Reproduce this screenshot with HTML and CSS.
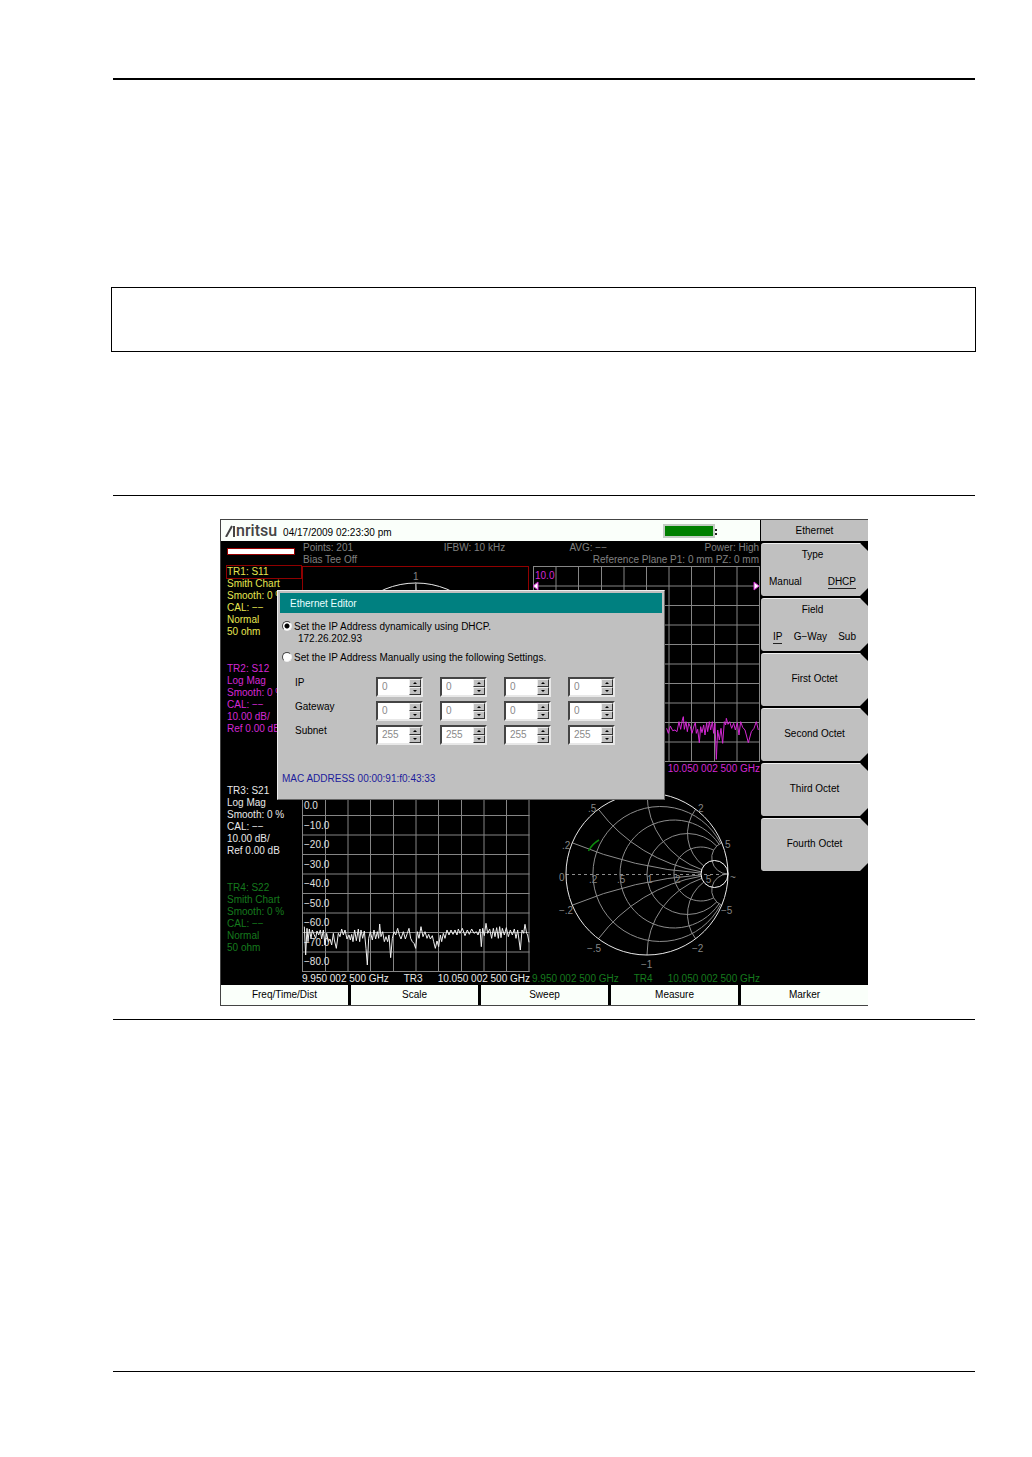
FILE: index.html
```html
<!DOCTYPE html>
<html lang="en">
<head>
<meta charset="utf-8">
<title>Ethernet Editor</title>
<link rel="stylesheet" href="styles.css">
</head>
<body>
<main class="page">
  <header class="page-head"></header>
  <aside class="note"></aside>
  <figure class="figure">
    <div class="screen">
      <div class="display">
        <header class="topbar">
          <span class="logo" aria-label="Anritsu">
            <svg class="logo-mark" viewBox="0 0 11 12" aria-hidden="true"><path d="M1 12 7 1M9 1V12" fill="none" stroke="#444" stroke-width="2"/></svg><span>nritsu</span>
          </span>
          <time>04/17/2009 02:23:30 pm</time>
          <span class="battery"></span>
        </header>
        <div class="workspace">
          <aside class="traces">
            <div class="sweep"></div>
            <div class="trace-group">
              <ul class="trace yellow"><li class="active">TR1: S11</li><li>Smith Chart</li><li>Smooth: 0 %</li><li>CAL: −−</li><li>Normal</li><li>50 ohm</li></ul>
              <ul class="trace magenta"><li>TR2: S12</li><li>Log Mag</li><li>Smooth: 0 %</li><li>CAL: −−</li><li>10.00 dB/</li><li>Ref 0.00 dB</li></ul>
            </div>
            <div class="trace-group">
              <ul class="trace white"><li>TR3: S21</li><li>Log Mag</li><li>Smooth: 0 %</li><li>CAL: −−</li><li>10.00 dB/</li><li>Ref 0.00 dB</li></ul>
              <ul class="trace green"><li>TR4: S22</li><li>Smith Chart</li><li>Smooth: 0 %</li><li>CAL: −−</li><li>Normal</li><li>50 ohm</li></ul>
            </div>
          </aside>
          <div class="plots">
            <div class="status">
              <div class="status-row"><span>Points: 201</span><span>IFBW: 10 kHz</span><span>AVG: −−</span><span class="end">Power: High</span></div>
              <div class="status-row two"><span>Bias Tee Off</span><span class="end">Reference Plane P1: 0 mm PZ: 0 mm</span></div>
            </div>
            <div class="plot-grid">
              <section class="plot">
                <svg viewBox="0 0 230 198">
                  <defs>
                    <g id="half">
                      <path d="M-74.800-31.200A405 405 0 0 0 54-.9M-48.600-64.800A162 162 0 0 0 54.200-2.200M0-81A81 81 0 0 0 54.700-4.400M48.600-64.800A40.500 40.500 0 0 0 56.700-8.100M74.800-31.200A16.200 16.200 0 0 0 81 0"/>
                    </g>
                    <g id="smith" fill="none" stroke="#8c8c8c">
                      <use href="#half"/><use href="#half" transform="scale(1 -1)"/>
                      <path d="M73.600-30.600A67.500 67.500 0 1 0 73.600 30.600M72.100-29.700A54 54 0 1 0 72.100 29.700M69.800-27.900A40.500 40.500 0 1 0 69.800 27.900M66.700-23.800A27 27 0 1 0 66.700 23.800"/>
                      <path d="M-81 .5H81" stroke-dasharray="3 3"/>
                      <circle r="81" stroke="#e8e8e8"/>
                      <circle cx="67.500" r="13.500" stroke="#fff"/>
                    </g>
                  </defs>
                  <rect x="1.500" y="1.500" width="226" height="195" class="frame-red"/>
                  <use href="#smith" x="115" y="99"/>
                  <path d="M114.500 17V30" stroke="#8c8c8c"/>
                  <text class="tick dim" x="112" y="15">1</text>
                </svg>
                <div class="caption"></div>
              </section>
              <section class="plot">
                <svg viewBox="0 0 230 198">
                  <path class="grid" d="M2 1.500H228.500M2 21H228.500M2 40.500H228.500M2 60H228.500M2 79.500H228.500M2 99H228.500M2 118.500H228.500M2 138H228.500M2 157.500H228.500M2 177H228.500M2 196.500H228.500M2.500 1V197M25 1V197M47.500 1V197M70.500 1V197M93 1V197M115.500 1V197M138 1V197M160.500 1V197M183.500 1V197M206 1V197M228.500 1V197"/>
                  <path d="M2 21 7 17V25ZM228 21 223 17V25Z" fill="#fff" stroke="#d428d4"/>
                  <text class="tick magenta-fill" x="4" y="14">10.0</text>
                  <polyline class="line magenta-line" transform="translate(124 125) scale(.33333)" points="35,115 40,130 46,108 53,122 60,120 66,125 72,95 77,118 82,90 85,80 88,118 93,95 97,125 101,100 106,110 111,130 117,108 121,98 124,130 128,118 133,158 137,110 141,128 146,105 150,135 155,98 158,125 163,95 167,120 172,95 176,130 180,100 184,208 188,120 193,150 198,115 203,160 208,95 212,105 214,85 219,103 224,95 230,115 236,100 241,120 247,98 252,135 257,95 263,112 270,120 280,158 289,125 297,115 304,95 310,120"/>
                </svg>
                <div class="caption last magenta"><span>10.050 002 500 GHz</span></div>
              </section>
              <section class="plot">
                <svg viewBox="0 0 230 198">
                  <path class="grid" d="M1 1.500H228.500M1 21H228.500M1 40.500H228.500M1 60H228.500M1 79.500H228.500M1 99H228.500M1 118.500H228.500M1 138H228.500M1 157.500H228.500M1 177H228.500M1 196.500H228.500M1.500 1V197M24.500 1V197M47 1V197M69.500 1V197M92.500 1V197M115 1V197M137.500 1V197M160.500 1V197M183 1V197M205.500 1V197M228 1V197"/>
                  <g class="tick white-fill">
                    <text x="3" y="34">0.0</text><text x="3" y="54">−10.0</text><text x="3" y="73">−20.0</text><text x="3" y="93">−30.0</text><text x="3" y="112">−40.0</text><text x="3" y="132">−50.0</text><text x="3" y="151">−60.0</text><text x="3" y="171">−70.0</text><text x="3" y="190">−80.0</text>
                  </g>
                  <polyline class="line white-line" transform="translate(-86 0) scale(.33333)" points="268,455 272,540 276,460 279,500 283,462 288,490 292,465 297,478 302,490 306,468 311,480 316,465 320,492 325,465 330,510 335,475 340,500 345,492 350,510 355,475 358,495 364,520 370,475 375,485 380,462 385,480 390,465 396,492 402,480 406,495 410,478 414,500 419,465 424,497 430,462 434,500 438,465 443,490 448,468 453,520 457,570 461,490 466,470 472,495 477,465 482,492 487,470 491,490 494,447 498,485 503,470 508,500 513,485 518,500 522,480 527,548 532,490 537,470 542,480 548,460 553,480 558,492 565,470 571,492 577,475 582,460 587,490 592,500 597,505 602,520 607,470 612,490 618,455 624,485 630,470 636,490 641,478 646,492 652,482 656,500 661,520 666,498 671,515 676,480 680,500 685,475 690,490 696,465 702,480 708,465 714,478 720,465 726,480 730,462 735,475 742,460 750,482 757,465 763,478 770,462 777,475 784,470 789,480 795,462 799,515 803,460 808,482 813,445 818,475 824,462 830,490 835,460 840,485 845,458 850,490 854,455 858,488 862,460 868,480 874,458 880,485 886,465 892,480 898,462 903,490 908,465 916,525 921,465 926,475 930,448 935,475 938,480 942,502"/>
                </svg>
                <div class="caption white"><span>9.950 002 500 GHz</span><span>TR3</span><span>10.050 002 500 GHz</span></div>
              </section>
              <section class="plot">
                <svg viewBox="0 0 230 198">
                  <use href="#smith" x="116" y="99"/>
                  <g class="tick dim">
                    <text x="57" y="37">.5</text><text x="167" y="37">2</text><text x="31" y="74">.2</text><text x="194" y="73">5</text><text x="28" y="106">0</text><text x="199" y="106">~</text><text x="28" y="139">−.2</text><text x="190" y="139">−5</text><text x="56" y="177">−.5</text><text x="161" y="177">−2</text><text x="110" y="193">−1</text>
                    <text x="58" y="108">.2</text><text x="86" y="108">.5</text><text x="116" y="108">1</text><text x="144" y="108">2</text><text x="172" y="108">.5</text>
                  </g>
                  <path d="M57.500 76Q61 69 68 65" fill="none" stroke="#0b8a0b" stroke-width="1.500"/>
                </svg>
                <div class="caption green"><span>9.950 002 500 GHz</span><span>TR4</span><span>10.050 002 500 GHz</span></div>
              </section>
            </div>
          </div>
        </div>
      </div>

      <nav class="menu">
        <h2 class="menu-title">Ethernet</h2>
        <button class="key options"><span class="key-name">Type</span><span class="choices"><span>Manual</span><span class="on">DHCP</span></span></button>
        <button class="key options"><span class="key-name">Field</span><span class="choices three"><span class="on">IP</span><span>G−Way</span><span>Sub</span></span></button>
        <button class="key">First Octet</button>
        <button class="key">Second Octet</button>
        <button class="key">Third Octet</button>
        <button class="key">Fourth Octet</button>
      </nav>

      <nav class="tabs">
        <button>Freq/Time/Dist</button><button>Scale</button><button>Sweep</button><button>Measure</button><button>Marker</button>
      </nav>

      <form class="dialog" role="dialog" aria-labelledby="dialog-title">
        <h1 class="dialog-title" id="dialog-title">Ethernet Editor</h1>
        <div class="dialog-body">
          <label class="choice"><input type="radio" name="mode" checked><span>Set the IP Address dynamically using DHCP.</span></label>
          <p class="address">172.26.202.93</p>
          <label class="choice"><input type="radio" name="mode"><span>Set the IP Address Manually using the following Settings.</span></label>
          <div class="octets">
            <label for="ip1">IP</label>
            <span class="spin"><input id="ip1" value="0" disabled><button type="button" class="up" aria-label="Up" disabled></button><button type="button" class="down" aria-label="Down" disabled></button></span>
            <span class="spin"><input aria-label="IP second octet" value="0" disabled><button type="button" class="up" aria-label="Up" disabled></button><button type="button" class="down" aria-label="Down" disabled></button></span>
            <span class="spin"><input aria-label="IP third octet" value="0" disabled><button type="button" class="up" aria-label="Up" disabled></button><button type="button" class="down" aria-label="Down" disabled></button></span>
            <span class="spin"><input aria-label="IP fourth octet" value="0" disabled><button type="button" class="up" aria-label="Up" disabled></button><button type="button" class="down" aria-label="Down" disabled></button></span>
            <label for="gw1">Gateway</label>
            <span class="spin"><input id="gw1" value="0" disabled><button type="button" class="up" aria-label="Up" disabled></button><button type="button" class="down" aria-label="Down" disabled></button></span>
            <span class="spin"><input aria-label="Gateway second octet" value="0" disabled><button type="button" class="up" aria-label="Up" disabled></button><button type="button" class="down" aria-label="Down" disabled></button></span>
            <span class="spin"><input aria-label="Gateway third octet" value="0" disabled><button type="button" class="up" aria-label="Up" disabled></button><button type="button" class="down" aria-label="Down" disabled></button></span>
            <span class="spin"><input aria-label="Gateway fourth octet" value="0" disabled><button type="button" class="up" aria-label="Up" disabled></button><button type="button" class="down" aria-label="Down" disabled></button></span>
            <label for="sn1">Subnet</label>
            <span class="spin"><input id="sn1" value="255" disabled><button type="button" class="up" aria-label="Up" disabled></button><button type="button" class="down" aria-label="Down" disabled></button></span>
            <span class="spin"><input aria-label="Subnet second octet" value="255" disabled><button type="button" class="up" aria-label="Up" disabled></button><button type="button" class="down" aria-label="Down" disabled></button></span>
            <span class="spin"><input aria-label="Subnet third octet" value="255" disabled><button type="button" class="up" aria-label="Up" disabled></button><button type="button" class="down" aria-label="Down" disabled></button></span>
            <span class="spin"><input aria-label="Subnet fourth octet" value="255" disabled><button type="button" class="up" aria-label="Up" disabled></button><button type="button" class="down" aria-label="Down" disabled></button></span>
          </div>
          <p class="mac">MAC ADDRESS 00:00:91:f0:43:33</p>
        </div>
      </form>
    </div>
  </figure>
  <footer class="page-foot"></footer>
</main>
</body>
</html>
```
FILE: styles.css
```css
* { box-sizing: border-box; }
body { margin: 0; background: #fff; color: #000; font: 10px/12px "Liberation Sans", Arial, sans-serif; }
h1, h2, p, ul, figure { margin: 0; padding: 0; font: inherit; }
ul { list-style: none; }
button, input { margin: 0; padding: 0; font: inherit; color: inherit; border: 0; border-radius: 0; }

.page { padding: 78px 57px 84px 113px; }
.page-head { border-top: 2px solid #000; }
.note { min-height: 65px; margin: 207px -1px 143px -2px; border: 1px solid #000; }
.figure { padding: 23px 0 13px; border: solid #000; border-width: 1px 0; }
.page-foot { margin-top: 351px; border-top: 1px solid #000; }

.screen { position: relative; display: grid; grid-template-columns: minmax(0, 1fr) 108px; max-width: 648px; margin: 0 auto; background: #000; white-space: nowrap; border: 1px solid #444; border-width: 1px 0 1px 1px; }

.topbar { display: flex; align-items: center; gap: 6px; height: 21px; padding: 0 45px 0 4px; background: #fafffa; }
.logo { display: flex; align-items: center; font: 500 16px/20px Roboto, sans-serif; color: #444; }
.logo-mark { width: 11px; height: 12px; }
.topbar time { padding-top: 4px; }
.battery { position: relative; width: 52px; height: 14px; margin-left: auto; background: #008000; border: 2px solid #c4ccc4; }
.battery::after { content: ""; position: absolute; left: 50px; top: 3px; height: 6px; border-right: 2px dotted #222; }

.workspace { display: grid; grid-template-columns: 80px minmax(0, 1fr); }
.traces { display: flex; flex-direction: column; padding: 7px 0 0 6px; }
.sweep { height: 7px; margin-right: 6px; background: #fff; border: 1px solid #900; }
.trace-group { display: grid; gap: 25px; margin-top: 11px; }
.trace-group + .trace-group { margin-top: 50px; }
.active { outline: 1px solid #900000; }
.yellow { color: #e6e650; }
.magenta { color: #d428d4; }
.white { color: #e8e8e8; }
.green { color: #157a1d; }

.status { height: 24px; padding: 0 1px 0 2px; color: #808080; line-height: 13px; }
.status-row { display: grid; grid-template-columns: 141fr 126fr 134fr 56fr; height: 12px; }
.status-row.two { grid-template-columns: 1fr auto; }
.end { text-align: right; }
.plot-grid { display: grid; grid-template-columns: 1fr 1fr; margin-right: -1px; }
.plot { min-width: 0; }
.plot svg { display: block; width: 100%; }
.caption { display: flex; justify-content: space-between; min-height: 12px; padding: 0 1px; }
.caption.last { justify-content: flex-end; }
.grid { fill: none; stroke: #858585; }
.frame-red { fill: none; stroke: #900000; }
.tick { font-size: 10px; }
.dim { fill: #858585; }
.magenta-fill { fill: #d428d4; }
.white-fill { fill: #e0e0e0; }
.line { fill: none; stroke-width: 3px; }
.magenta-line { stroke: #d428d4; }
.white-line { stroke: #f0f0f0; }

.menu { display: flex; flex-direction: column; gap: 2px; padding-left: 1px; }
.menu-title { height: 21px; background: #c0c0c0; text-align: center; line-height: 22px; }
.key { height: 53px; padding-bottom: 2px; background: #c0c0c0; border-top: 1px solid #eee; border-radius: 3px; clip-path: polygon(0 0, 99px 0, 100% 8px, 100% 45px, 99px 100%, 0 100%); }
.options { display: flex; flex-direction: column; justify-content: space-between; padding: 5px 12px 7px 8px; }
.key-name { align-self: center; }
.choices { display: flex; justify-content: space-between; align-self: stretch; }
.choices.three { padding-left: 4px; }
.on { border-bottom: 1px solid #222; }

.tabs { grid-column: 1 / -1; display: grid; grid-template-columns: repeat(5, 1fr); gap: 3px; }
.tabs button { height: 20px; background: #fafffa; }

.dialog { position: absolute; left: 56px; top: 70px; width: 388px; height: 210px; padding: 2px; background: #c0c0c0; border: 1px solid #ececec; border-right-color: #666; border-bottom-color: #666; }
.dialog-title { height: 20px; padding-left: 10px; line-height: 21px; background: #008080; color: #e8ffff; }
.dialog-body { padding: 8px 2px 0; }
.choice { display: flex; gap: 2px; line-height: 12px; }
.choice input { appearance: none; width: 10px; height: 10px; background: #fff; border: 1px solid; border-color: #444 #eee #eee #444; border-radius: 50%; }
.choice input:checked { background: radial-gradient(circle, #000 2px, #fff 3px); }
.address { padding: 0 16px; }
.address + .choice { margin-top: 7px; }
.octets { display: grid; grid-template-columns: 64px repeat(4, 47px); gap: 4px 17px; padding: 13px 0 0 13px; }
.spin { display: grid; grid-template-columns: 1fr 12px; grid-template-rows: 8px 8px; height: 20px; border: 2px solid; border-color: #444 #e8e8e8 #e8e8e8 #444; background: #fff; }
.spin input { grid-row: 1 / 3; min-width: 0; width: 100%; padding-left: 4px; background: #fff; color: #8a8a8a; }
.spin button { display: grid; place-items: center; background: #c0c0c0; border: 1px solid; border-color: #eee #333 #333 #eee; }
.spin button::before { content: ""; border: solid transparent; border-width: 0 2px 2px; border-bottom-color: #000; }
.spin .down::before { border-width: 2px 2px 0; border-top-color: #000; }
.mac { margin-top: 28px; color: #1c1c9c; }
```
